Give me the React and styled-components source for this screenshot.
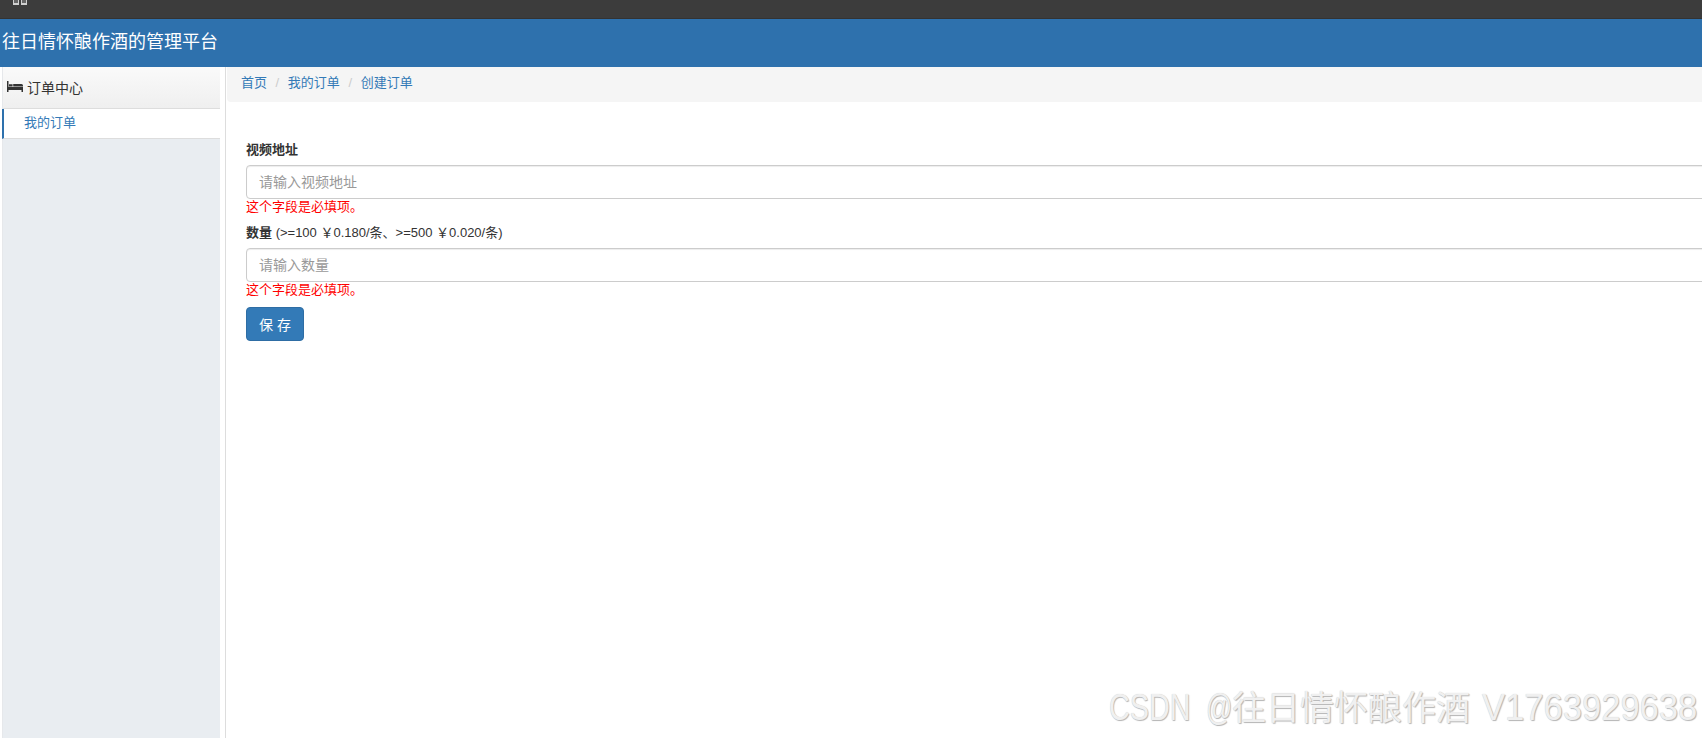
import React from "react";
import styled, { createGlobalStyle } from "styled-components";

const GlobalStyle = createGlobalStyle`
  html, body {
    margin: 0;
    padding: 0;
    height: 100%;
    overflow: hidden;
    background: #fff;
    font-family: "Liberation Sans", "Noto Sans CJK SC", sans-serif;
    color: #333;
  }
  * { box-sizing: border-box; }
`;

const Page = styled.div`
  width: 1702px;
  height: 738px;
  display: flex;
  flex-direction: column;
  overflow: hidden;
`;

const TopBar = styled.div`
  height: 19px;
  flex: none;
  background: #3c3c3c;
  border-bottom: 1px solid #333;
  padding-left: 13px;
  display: flex;
  align-items: flex-start;
  gap: 2px;
  overflow: hidden;
`;

const TopSquare = styled.span`
  width: 6px;
  height: 5px;
  background: #666;
  border: 1px solid #d0d0d0;
  border-top: none;
  border-bottom-width: 2px;
`;

const Brand = styled.div`
  height: 48px;
  flex: none;
  background: #2e71ad;
  color: #fff;
  font-size: 18px;
  line-height: 47px;
  padding-left: 2px;
`;

const Body = styled.div`
  flex: 1;
  display: flex;
  min-height: 0;
`;

const Sidebar = styled.aside`
  width: 226px;
  flex: none;
  padding-left: 2px;
  padding-right: 5px;
  border-right: 1px solid #ddd;
  display: flex;
  background: #fff;
`;

const SideInner = styled.div`
  flex: 1;
  background: #e9edf1;
  border-left: 1px solid #e6e8eb;
`;

const SideHead = styled.div`
  height: 42px;
  display: flex;
  align-items: center;
  gap: 4px;
  padding: 0 0 2px 4px;
  font-size: 14px;
  color: #333;
  background: linear-gradient(to bottom, #fafafa, #efefef);
  border-bottom: 1px solid #ddd;
`;

const BedIcon = styled.svg`
  width: 16px;
  height: 11px;
  flex: none;
  fill: #333;
`;

const SideItem = styled.a`
  display: block;
  height: 30px;
  line-height: 27px;
  padding-left: 20px;
  font-size: 13px;
  color: #337ab7;
  background: #fff;
  border-left: 2px solid #2e71ad;
  border-bottom: 1px solid #ddd;
  margin-left: -1px;
`;

const Main = styled.main`
  flex: 1;
  min-width: 0;
  padding-left: 1px;
`;

const Breadcrumb = styled.ol`
  list-style: none;
  margin: 0;
  height: 35px;
  padding: 0 0 3px 14px;
  display: flex;
  align-items: center;
  background: #f5f5f5;
  border-radius: 0 0 0 4px;
  font-size: 13px;
  line-height: 30px;
`;

const Crumb = styled.li`
  color: #337ab7;
  & + &::before {
    content: "/";
    color: #ccc;
    padding: 0 8.6px;
  }
`;

const Form = styled.form`
  padding: 39px 0 0 19px;
  width: 1600px;
`;

const Label = styled.label`
  display: block;
  font-size: 13px;
  line-height: 18px;
  color: #333;
  margin-bottom: 6px;
  b { font-weight: 700; }
`;

const Input = styled.input`
  display: block;
  width: 100%;
  height: 34px;
  padding: 6px 12px;
  font-size: 14px;
  font-family: inherit;
  color: #555;
  background: #fff;
  border: 1px solid #ccc;
  border-radius: 4px;
  box-shadow: inset 0 1px 1px rgba(0, 0, 0, 0.075);
  &::placeholder { color: #999; opacity: 1; }
`;

const FieldError = styled.div`
  font-size: 13px;
  line-height: 17px;
  color: #f00;
  margin: -1px 0 9px;
`;

const SaveButton = styled.button`
  display: block;
  width: 58px;
  height: 34px;
  margin-top: 7px;
  padding: 0;
  font-size: 14px;
  font-family: inherit;
  color: #fff;
  background: #337ab7;
  border: 1px solid #2e6da4;
  border-radius: 4px;
`;

/* the watermark font is narrower than Liberation, so parts get squeezed */
const Watermark = styled.div`
  position: absolute;
  left: 1109px;
  top: 688px;
  display: flex;
  align-items: baseline;
  line-height: 40px;
  white-space: nowrap;
  color: #f0f0f0;
  text-shadow: 1px 1px 1px #b4b4b4, 0 0 1px #c8c8c8;
  pointer-events: none;
`;

const MarkPart = styled.span`
  display: inline-block;
  flex: none;
  width: ${(p) => p.$w}px;
  font-size: ${(p) => p.$size}px;
  transform: scaleX(${(p) => p.$sx});
  transform-origin: left center;
`;

export default function App() {
  return (
    <Page>
      <GlobalStyle />
      <TopBar>
        <TopSquare />
        <TopSquare />
      </TopBar>
      <Brand>往日情怀酿作酒的管理平台</Brand>
      <Body>
        <Sidebar>
          <SideInner>
            <SideHead>
              <BedIcon viewBox="0 0 16 11">
                <path d="M0 0h1.5v6H16v5h-1.5V9h-13v2H0z" />
                <path d="M2 3.2h3.6v2.3H2zM6.2 3h8.3a1.5 1.5 0 0 1 1.5 1.5v1H6.2z" />
              </BedIcon>
              订单中心
            </SideHead>
            <SideItem>我的订单</SideItem>
          </SideInner>
        </Sidebar>
        <Main>
          <Breadcrumb>
            <Crumb>首页</Crumb>
            <Crumb>我的订单</Crumb>
            <Crumb>创建订单</Crumb>
          </Breadcrumb>
          <Form>
            <Label>
              <b>视频地址</b>
            </Label>
            <Input placeholder="请输入视频地址" />
            <FieldError>这个字段是必填项。</FieldError>
            <Label>
              <b>数量</b> (&gt;=100 ￥0.180/条、&gt;=500 ￥0.020/条)
            </Label>
            <Input placeholder="请输入数量" />
            <FieldError>这个字段是必填项。</FieldError>
            <SaveButton type="button">保 存</SaveButton>
          </Form>
        </Main>
      </Body>
      <Watermark>
        <MarkPart $w={97} $size={36} $sx={0.8}>CSDN</MarkPart>
        <MarkPart $w={26} $size={36} $sx={0.72}>@</MarkPart>
        <MarkPart $w={250} $size={34} $sx={1}>往日情怀酿作酒</MarkPart>
        <MarkPart $w={216} $size={36} $sx={0.96}>V1763929638</MarkPart>
      </Watermark>
    </Page>
  );
}
